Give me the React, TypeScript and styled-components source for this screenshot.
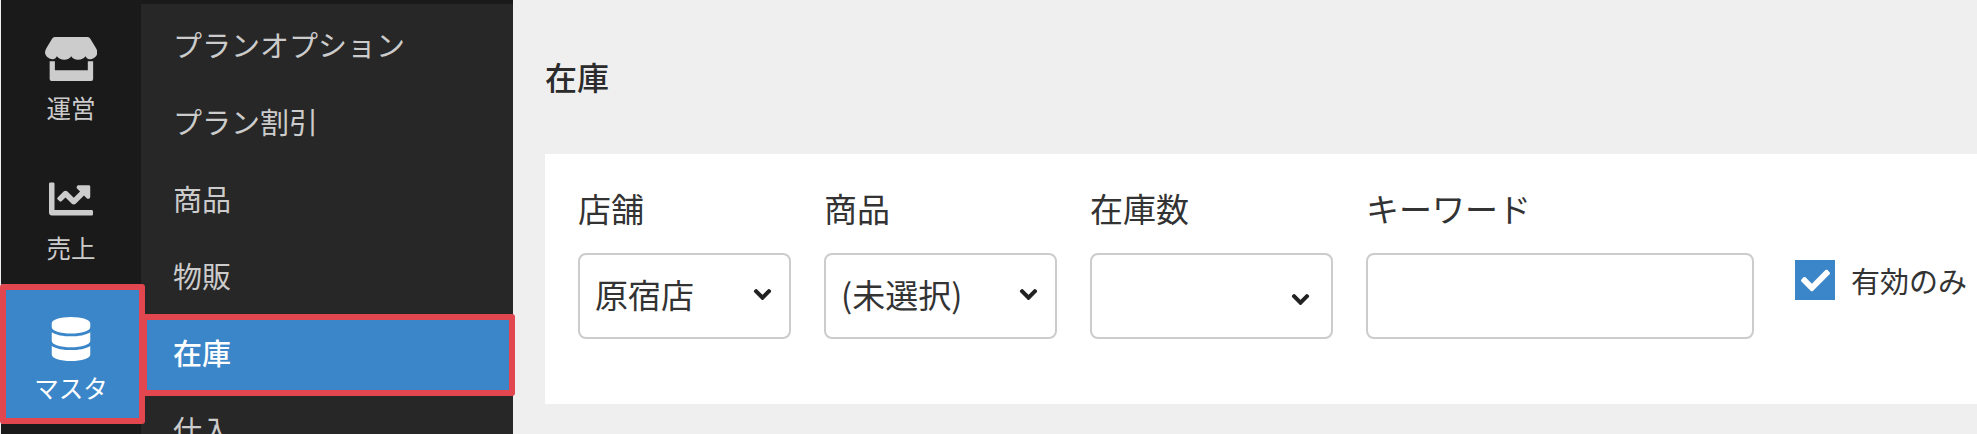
import React from "react";
import styled, { createGlobalStyle, css } from "styled-components";
import { FaChartLine, FaCheck, FaChevronDown, FaDatabase } from "react-icons/fa";

const FONT = `"Noto Sans CJK JP", "Noto Sans", sans-serif`;
const BLUE = "#3b86c8";
const RED = "#e2474f";

const GlobalStyle = createGlobalStyle`
  html, body {
    margin: 0;
    height: 434px;
    overflow: hidden;
    background: #efefef;
    font-family: ${FONT};
  }
`;

const Page = styled.div`
  display: flex;
  width: 1977px;
  height: 434px;
  padding-left: 1px;
  box-sizing: border-box;
  overflow: hidden;
`;

const Sidebar = styled.nav`
  display: flex;
  flex: none;
  width: 512px;
  padding-top: 4px;
  box-sizing: border-box;
  background: #1a1a1a;
`;

const Rail = styled.ul`
  flex: none;
  width: 140px;
  margin: 0;
  padding: 0;
  list-style: none;
`;

const highlight = css`
  content: "";
  position: absolute;
  border: 6px solid ${RED};
  border-radius: 3px;
  box-sizing: border-box;
  pointer-events: none;
`;

const RailItem = styled.li<{ $active?: boolean }>`
  position: relative;
  display: flex;
  flex-direction: column;
  align-items: center;
  height: 140px;
  padding-top: 33px;
  box-sizing: border-box;
  color: #cccccc;

  ${(p) =>
    p.$active &&
    css`
      z-index: 2;
      background: ${BLUE};
      color: #ffffff;

      &::after {
        ${highlight}
        inset: 0 -4px 0 -1px;
      }
    `}
`;

const RailIcon = styled.span`
  display: flex;
  align-items: center;
  justify-content: center;
  height: 44px;

  svg {
    flex: none;
    width: auto;
    height: 44px;
  }
`;

const RailLabel = styled.span`
  margin-top: 11px;
  font-size: 24.5px;
  line-height: 32px;
`;

const SubMenu = styled.ul`
  flex: 1;
  margin: 0;
  padding: 4px 0 0;
  list-style: none;
  background: #272727;
`;

const SubItem = styled.li<{ $active?: boolean }>`
  position: relative;
  height: 77px;
  padding-left: 32px;
  font-size: 29px;
  line-height: 72px;
  color: #cccccc;
  white-space: nowrap;

  ${(p) =>
    p.$active &&
    css`
      background: ${BLUE};
      color: #ffffff;
      font-weight: 500;

      &::after {
        ${highlight}
        inset: -2px -2px -3px 0;
      }
    `}
`;

const Main = styled.main`
  flex: 1;
  min-width: 0;
  padding-left: 32px;
`;

const Title = styled.h1`
  margin: 0;
  height: 154px;
  font-size: 32px;
  font-weight: 500;
  line-height: 153px;
  color: #2b2b2b;
`;

const Card = styled.section`
  display: flex;
  align-items: flex-start;
  gap: 33px;
  height: 250px;
  padding: 30px 0 0 33px;
  box-sizing: border-box;
  background: #ffffff;
`;

const Field = styled.label<{ $width: number }>`
  display: flex;
  flex: none;
  flex-direction: column;
  gap: 21px;
  width: ${(p) => p.$width}px;
`;

const FieldLabel = styled.span`
  font-size: 33px;
  line-height: 48px;
  color: #333333;
  white-space: nowrap;
`;

const SelectWrap = styled.div`
  position: relative;
`;

const controlStyle = css`
  display: block;
  width: 100%;
  height: 86px;
  margin: 0;
  padding: 0 16px;
  box-sizing: border-box;
  border: 2px solid #cccccc;
  border-radius: 8px;
  background: #ffffff;
  font-family: ${FONT};
  font-size: 33px;
  color: #333333;
  outline: none;
`;

const Select = styled.select`
  ${controlStyle}
  appearance: none;
  padding-bottom: 4px;
  padding-left: 15px;
`;

const TextInput = styled.input`
  ${controlStyle}
`;

const Chevron = styled(FaChevronDown)<{ $right: number; $top: number }>`
  position: absolute;
  top: ${(p) => p.$top}px;
  right: ${(p) => p.$right}px;
  width: 19px;
  height: 19px;
  color: #222222;
  stroke: currentColor;
  stroke-width: 30px;
  pointer-events: none;
`;

const CheckField = styled.label`
  display: flex;
  align-items: center;
  gap: 16px;
  margin: 75px 0 0 8px;
`;

const CheckBox = styled.span`
  display: flex;
  flex: none;
  align-items: center;
  justify-content: center;
  width: 40px;
  height: 40px;
  background: ${BLUE};
  color: #ffffff;

  svg {
    font-size: 29px;
  }
`;

const CheckText = styled.span`
  font-size: 29px;
  line-height: 42px;
  white-space: nowrap;
  color: #333333;
`;

// the package's store glyph comes out too narrow, so it's drawn here
const StoreIcon = () => (
  <svg viewBox="0 0 53 44.5" fill="currentColor">
    <path d="M10 0H43Q45 0 46 2L51.5 11Q53 13.5 53 15.5C53 20 48 23 44.5 22.5Q42 22 41 19.5Q38.5 23 33.5 23Q28.5 23 26.5 19.5Q24.5 23 19.5 23Q14.5 23 12 19.5Q11 22 8.5 22.5C5 23 0 20 0 15.5Q0 13.5 1.5 11L7 2Q8 0 10 0Z" />
    <path d="M4.7 24.5H10V33.7H43.3V24.5H48.7V42.5Q48.7 44.5 46.7 44.5H6.7Q4.7 44.5 4.7 42.5Z" />
  </svg>
);

const railItems = [
  { label: "運営", icon: <StoreIcon /> },
  { label: "売上", icon: <FaChartLine /> },
  { label: "マスタ", icon: <FaDatabase />, active: true },
];

const subItems = [
  { label: "プランオプション" },
  { label: "プラン割引" },
  { label: "商品" },
  { label: "物販" },
  { label: "在庫", active: true },
  { label: "仕入" },
];

const selects = [
  { label: "店舗", width: 213, value: "原宿店", chevronRight: 19, chevronTop: 32 },
  { label: "商品", width: 233, value: "(未選択)", chevronRight: 19, chevronTop: 32 },
  { label: "在庫数", width: 243, value: "", chevronRight: 23, chevronTop: 37 },
];

function App() {
  return (
    <Page>
      <GlobalStyle />
      <Sidebar>
        <Rail>
          {railItems.map((item) => (
            <RailItem key={item.label} $active={item.active}>
              <RailIcon>{item.icon}</RailIcon>
              <RailLabel>{item.label}</RailLabel>
            </RailItem>
          ))}
        </Rail>
        <SubMenu>
          {subItems.map((item) => (
            <SubItem key={item.label} $active={item.active}>
              {item.label}
            </SubItem>
          ))}
        </SubMenu>
      </Sidebar>
      <Main>
        <Title>在庫</Title>
        <Card>
          {selects.map((s) => (
            <Field key={s.label} $width={s.width}>
              <FieldLabel>{s.label}</FieldLabel>
              <SelectWrap>
                <Select defaultValue={s.value}>
                  <option value={s.value}>{s.value}</option>
                </Select>
                <Chevron $right={s.chevronRight} $top={s.chevronTop} />
              </SelectWrap>
            </Field>
          ))}
          <Field $width={388}>
            <FieldLabel>キーワード</FieldLabel>
            <TextInput type="text" />
          </Field>
          <CheckField>
            <CheckBox>
              <FaCheck />
            </CheckBox>
            <CheckText>有効のみ</CheckText>
          </CheckField>
        </Card>
      </Main>
    </Page>
  );
}

export default App;
